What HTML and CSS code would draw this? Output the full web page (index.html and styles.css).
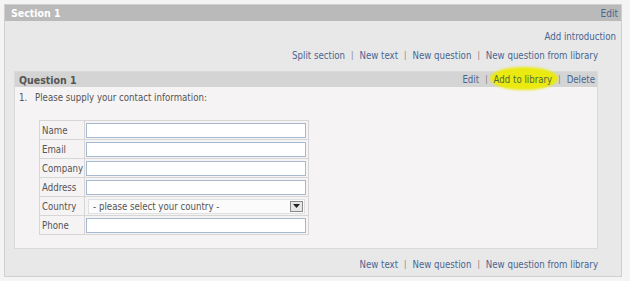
FILE: index.html
```html
<!DOCTYPE html>
<html>
<head>
<meta charset="utf-8">
<link rel="stylesheet" href="styles.css">
</head>
<body>
<div class="section">
  <div class="section-header">
    <span class="section-title">Section 1</span>
    <a class="link">Edit</a>
  </div>
  <div class="section-body">
    <div class="intro-row"><a class="link">Add introduction</a></div>
    <div class="links-row">
      <a class="link">Split section</a><span class="sep">|</span><a class="link">New text</a><span class="sep">|</span><a class="link">New question</a><span class="sep">|</span><a class="link">New question from library</a>
    </div>
    <div class="question">
      <div class="question-header">
        <span class="question-title">Question 1</span>
        <div class="question-actions">
          <a class="link">Edit</a><span class="sep">|</span><a class="link highlighted">Add to library</a><span class="sep">|</span><a class="link">Delete</a>
        </div>
      </div>
      <div class="question-body">
        <p class="question-text"><span class="qnum">1.</span>Please supply your contact information:</p>
        <table class="contact">
          <tr><td class="label">Name</td><td class="field"><span class="input"></span></td></tr>
          <tr><td class="label">Email</td><td class="field"><span class="input"></span></td></tr>
          <tr><td class="label">Company</td><td class="field"><span class="input"></span></td></tr>
          <tr><td class="label">Address</td><td class="field"><span class="input"></span></td></tr>
          <tr><td class="label">Country</td><td class="field"><span class="select"><span class="select-text">- please select your country -</span><span class="select-btn"><svg width="7" height="4" viewBox="0 0 7 4"><path d="M0 0H7L3.5 4Z" fill="#222"/></svg></span></span></td></tr>
          <tr><td class="label">Phone</td><td class="field"><span class="input"></span></td></tr>
        </table>
      </div>
    </div>
    <div class="links-row bottom">
      <a class="link">New text</a><span class="sep">|</span><a class="link">New question</a><span class="sep">|</span><a class="link">New question from library</a>
    </div>
  </div>
</div>
</body>
</html>
```
FILE: styles.css
```css
html, body {
  margin: 0;
  padding: 0;
}
body {
  background: #f4f4f4;
  font-family: "DejaVu Sans Condensed", "DejaVu Sans", sans-serif;
  font-size: 9.6px;
  color: #555;
  padding: 4px 0 0 4px;
}
.section {
  width: 616px;
  border: 1px solid #cfcfcf;
  background: #e8e8e8;
}
.section-header {
  height: 16px;
  background: #bababa;
  display: flex;
  align-items: center;
  justify-content: space-between;
  padding: 0 3px 0 6px;
}
.section-title {
  color: #fff;
  font-weight: bold;
  font-size: 10.5px;
}
.section-header .link {
  font-size: 10px;
}
.link {
  color: #4a6590;
  cursor: pointer;
}
.sep {
  color: #777;
  margin: 0 6px;
  font-size: 8px;
}
.section-body {
  padding: 9px 0 0 9px;
  height: 255px;
  box-sizing: border-box;
}
.intro-row {
  display: flex;
  justify-content: flex-end;
  padding-right: 5px;
  height: 14px;
  line-height: 14px;
}
.links-row {
  display: flex;
  justify-content: flex-end;
  align-items: center;
  margin-right: 23px;
  margin-top: 5px;
  height: 14px;
  line-height: 14px;
}
.question {
  margin-top: 8px;
  width: 584px;
  border: 1px solid #dadada;
  background: #f5f3f3;
  box-sizing: border-box;
}
.question-header {
  height: 15px;
  background: #d4d4d4;
  display: flex;
  align-items: center;
  justify-content: space-between;
  padding: 0 2px 0 4px;
}
.question-title {
  color: #555;
  font-weight: bold;
  font-size: 10.5px;
}
.question-actions {
  display: flex;
  align-items: center;
}
.highlighted {
  position: relative;
  color: #4f6a3a;
  z-index: 0;
}
.highlighted::before {
  content: "";
  position: absolute;
  left: -4px;
  right: -6px;
  top: -7px;
  bottom: -5px;
  background: #eaea10;
  border-radius: 50%;
  filter: blur(1px);
  z-index: -1;
}
.question-body {
  padding: 4px 0 13px 4px;
}
.question-text {
  margin: 0 0 15px 0;
  line-height: 14px;
}
.qnum {
  display: inline-block;
  width: 16px;
}
.contact {
  margin-left: 20px;
  border-collapse: collapse;
  border: 1px solid #c8c8c8;
}
.contact td {
  border: 1px solid #d6d6d6;
  height: 18px;
  padding: 0;
}
.contact td.label {
  width: 37px;
  padding: 0 1px 0 2px;
  color: #555;
}
.contact td.field {
  padding: 0 2px 0 1px;
  width: 220px;
}
.input {
  display: block;
  height: 13px;
  border: 1px solid #a7b9cf;
  background: #fff;
}
.select {
  display: flex;
  align-items: center;
  justify-content: space-between;
  height: 15px;
  margin: 0 1px 0 2px;
  border: 1px solid #e0e0e0;
  background: #fbfbfb;
  box-sizing: border-box;
}
.select-text {
  padding-left: 4px;
  color: #555;
}
.select-btn {
  width: 13px;
  height: 11px;
  margin-right: 1px;
  border: 1px solid #8a8a8a;
  background: #e6e6e6;
  display: flex;
  align-items: center;
  justify-content: center;
  box-sizing: border-box;
}
.links-row.bottom {
  margin-top: 9px;
}
```
